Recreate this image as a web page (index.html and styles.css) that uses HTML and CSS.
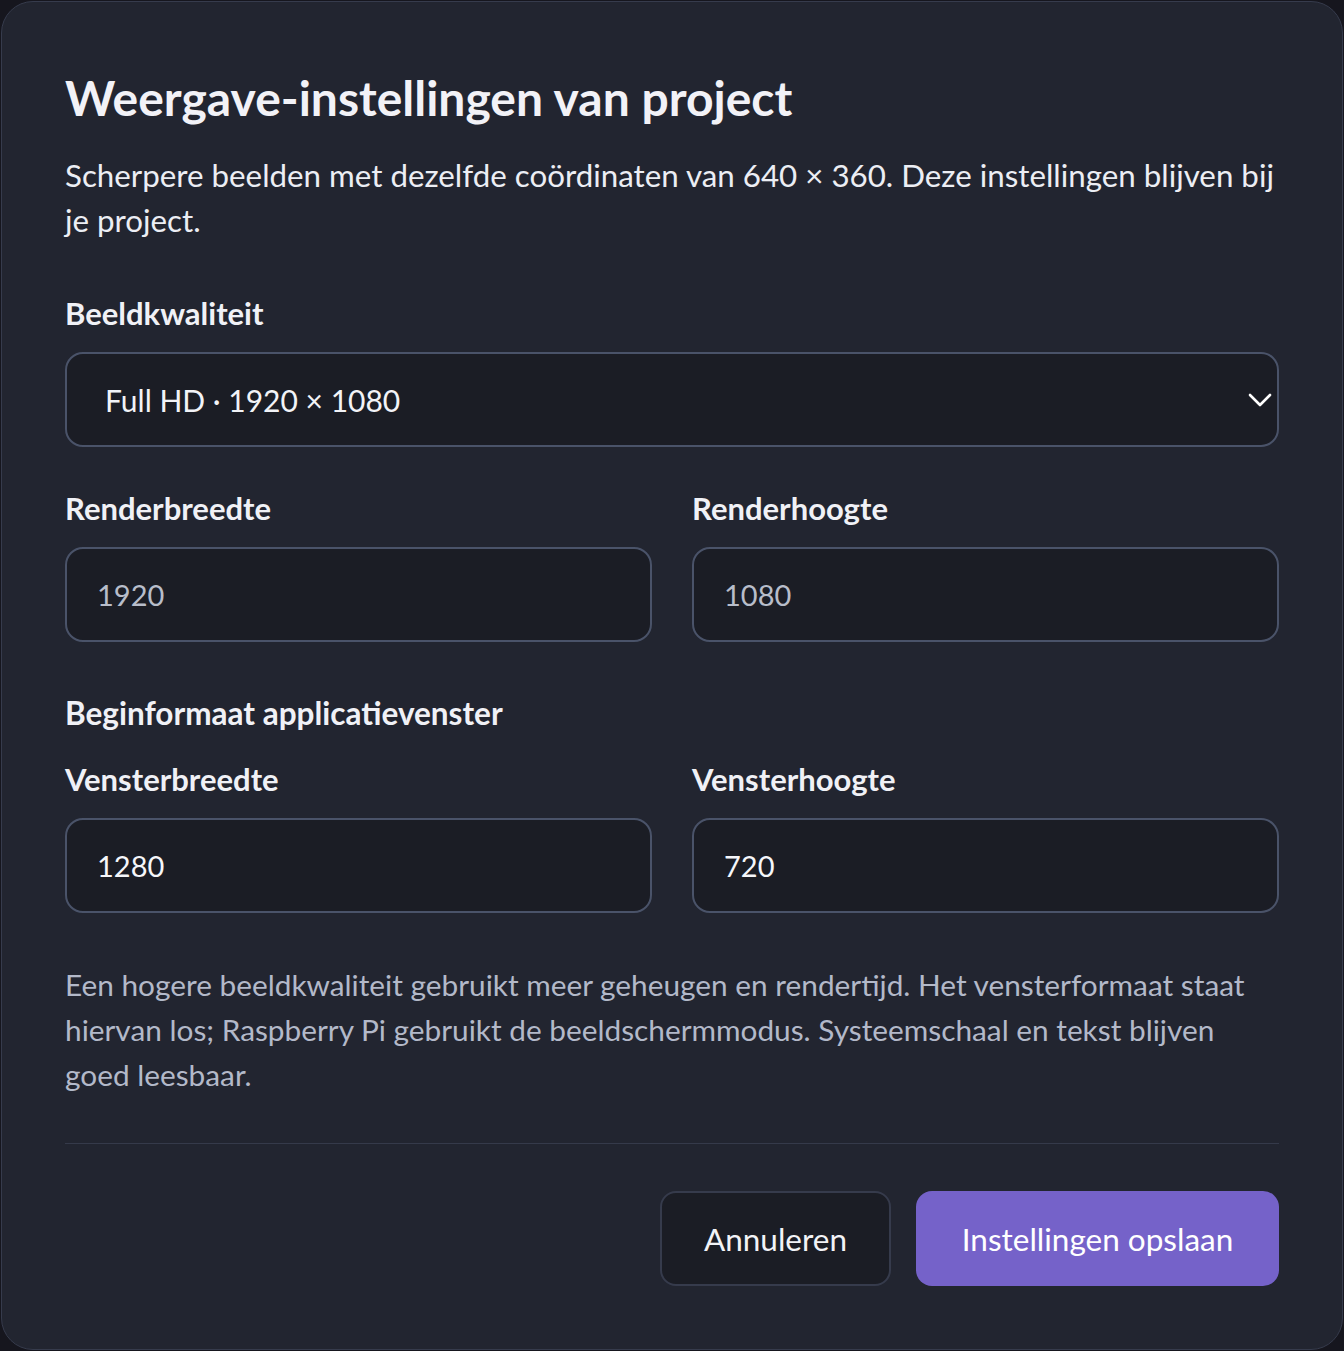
FILE: index.html
```html
<!DOCTYPE html>
<html lang="nl">
<head>
<meta charset="utf-8">
<title>Weergave-instellingen van project</title>
<link rel="stylesheet" href="styles.css">
</head>
<body>
<div class="dialog">
  <h1 class="title">Weergave-instellingen van project</h1>
  <p class="desc">Scherpere beelden met dezelfde coördinaten van 640 × 360. Deze instellingen blijven bij je project.</p>

  <div class="field field-quality">
    <label class="label">Beeldkwaliteit</label>
    <div class="select">
      <span class="select-value">Full HD · 1920 × 1080</span>
      <svg class="chevron" width="24" height="24" viewBox="0 0 24 24" fill="none" stroke="currentColor" stroke-width="2.6" stroke-linecap="round" stroke-linejoin="round"><path d="M2 7l10 10 10-10"/></svg>
    </div>
  </div>

  <div class="row row-render">
    <div class="field">
      <label class="label">Renderbreedte</label>
      <div class="input input-readonly">1920</div>
    </div>
    <div class="field">
      <label class="label">Renderhoogte</label>
      <div class="input input-readonly">1080</div>
    </div>
  </div>

  <h2 class="section">Beginformaat applicatievenster</h2>

  <div class="row row-window">
    <div class="field">
      <label class="label">Vensterbreedte</label>
      <div class="input">1280</div>
    </div>
    <div class="field">
      <label class="label">Vensterhoogte</label>
      <div class="input">720</div>
    </div>
  </div>

  <p class="help">Een hogere beeldkwaliteit gebruikt meer geheugen en rendertijd. Het vensterformaat staat hiervan los; Raspberry Pi gebruikt de beeldschermmodus. Systeemschaal en tekst blijven goed leesbaar.</p>

  <div class="divider"></div>

  <div class="actions">
    <button class="btn btn-secondary">Annuleren</button>
    <button class="btn btn-primary">Instellingen opslaan</button>
  </div>
</div>
</body>
</html>
```

FILE: styles.css
```css
html, body {
  margin: 0;
  padding: 0;
  background: #16161e;
}
body {
  font-family: "Segoe UI", Lato, "Noto Sans", sans-serif;
  color: #eef0f5;
}
.dialog {
  box-sizing: border-box;
  width: 1342px;
  height: 1349px;
  margin: 1px;
  background: #222530;
  border: 1px solid #363b4c;
  border-radius: 32px;
  padding: 70px 63px 63px 63px;
  display: flex;
  flex-direction: column;
}
.title {
  margin: 0;
  font-size: 48px;
  line-height: 52px;
  font-weight: 700;
  color: #f2f2f7;
}
.desc {
  margin: 28.5px 0 0 0;
  font-size: 31.3px;
  line-height: 45px;
  color: #eceef4;
}
.label, .section {
  display: block;
  font-size: 31px;
  line-height: 39px;
  font-weight: 700;
  color: #f0f1f6;
  margin: 0;
}
.section { font-size: 31.5px; }
.field {
  display: flex;
  flex-direction: column;
  gap: 19.5px;
  min-width: 0;
}
.field-quality { margin-top: 51px; }
.select {
  box-sizing: border-box;
  height: 95px;
  background: #1b1d25;
  border: 2px solid #4a5369;
  border-radius: 18px;
  display: flex;
  align-items: center;
  justify-content: space-between;
  padding: 0 5px 0 38px;
}
.select-value {
  font-size: 30px;
  color: #f2f3f7;
}
.chevron { color: #ffffff; }
.row {
  display: grid;
  grid-template-columns: 1fr 1fr;
  column-gap: 40px;
}
.row-render { margin-top: 41.5px; }
.section { margin-top: 51.5px; }
.row-window { margin-top: 27px; }
.input {
  box-sizing: border-box;
  height: 95px;
  background: #1b1d25;
  border: 2px solid #4a5369;
  border-radius: 18px;
  display: flex;
  align-items: center;
  padding: 0 30px;
  font-size: 29px;
  color: #f5f6fa;
}
.input-readonly { color: #b8bdca; }
.help {
  margin: 48.5px 0 0 0;
  font-size: 29.8px;
  line-height: 45px;
  color: #b3b9c9;
}
.divider {
  margin-top: 46px;
  height: 2px;
  background: #353a4a;
}
.actions {
  margin-top: 48px;
  display: flex;
  justify-content: flex-end;
  gap: 25px;
}
.btn {
  box-sizing: border-box;
  height: 95px;
  border-radius: 16px;
  font-family: inherit;
  font-size: 31.5px;
  padding: 0;
  cursor: pointer;
}
.btn-secondary {
  width: 231px;
  background: #1b1d25;
  border: 2px solid #363b4c;
  color: #f2f3f7;
}
.btn-primary {
  width: 363px;
  background: #7562c9;
  border: none;
  color: #ffffff;
}
```
